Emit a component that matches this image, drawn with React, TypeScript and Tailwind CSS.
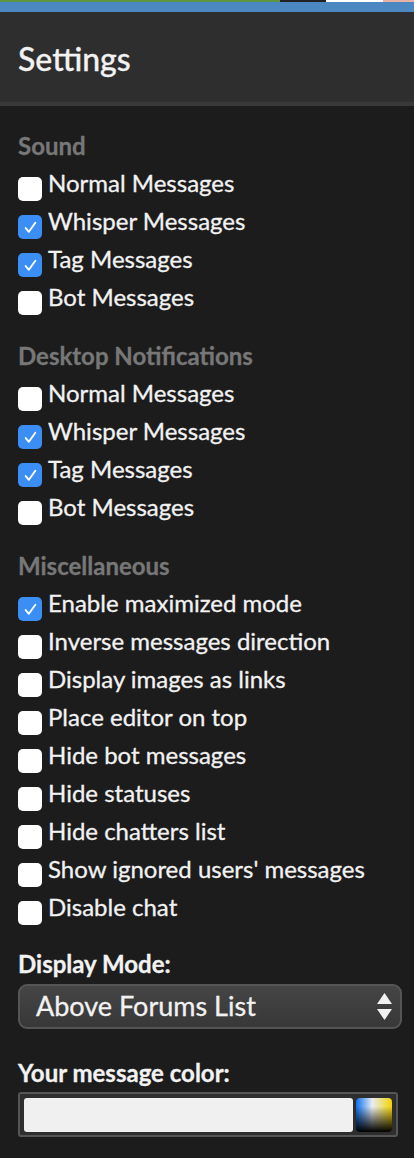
const sections = [
  {
    title: 'Sound',
    items: [
      { label: 'Normal Messages', checked: false },
      { label: 'Whisper Messages', checked: true },
      { label: 'Tag Messages', checked: true },
      { label: 'Bot Messages', checked: false },
    ],
  },
  {
    title: 'Desktop Notifications',
    items: [
      { label: 'Normal Messages', checked: false },
      { label: 'Whisper Messages', checked: true },
      { label: 'Tag Messages', checked: true },
      { label: 'Bot Messages', checked: false },
    ],
  },
  {
    title: 'Miscellaneous',
    items: [
      { label: 'Enable maximized mode', checked: true },
      { label: 'Inverse messages direction', checked: false },
      { label: 'Display images as links', checked: false },
      { label: 'Place editor on top', checked: false },
      { label: 'Hide bot messages', checked: false },
      { label: 'Hide statuses', checked: false },
      { label: 'Hide chatters list', checked: false },
      { label: "Show ignored users' messages", checked: false },
      { label: 'Disable chat', checked: false },
    ],
  },
];

function Checkbox({ checked }: { checked: boolean }) {
  if (checked) {
    return (
      <span className="mt-[13px] mr-[6px] flex h-[24px] w-[24px] shrink-0 items-center justify-center rounded-[5px] bg-[#3b8ef3]">
        <svg width="15" height="15" viewBox="0 0 14 14" fill="none">
          <path d="M2.5 7.5 L5.5 11 L11.5 2.5" stroke="#fff" strokeWidth="1.7" strokeLinecap="round" strokeLinejoin="round" />
        </svg>
      </span>
    );
  }
  return <span className="mt-[13px] mr-[6px] h-[24px] w-[24px] shrink-0 rounded-[5px] bg-white" />;
}

export default function App() {
  return (
    <div className="min-h-[1158px] w-[414px] bg-[#1c1c1c] text-[#f2f2f2] [font-family:Lato,sans-serif] [-webkit-text-stroke:0.3px_currentColor]">
      {/* top strip */}
      <div className="flex h-[2px]">
        <div className="w-[280px] bg-[#5d9640]" />
        <div className="w-[46px] bg-[#222]" />
        <div className="w-[57px] bg-white" />
        <div className="flex-1 bg-[#e6b2a4]" />
      </div>
      <div className="h-[10px] bg-[#4b87c1]" />

      {/* header */}
      <div className="box-content flex h-[90px] items-center border-b-4 border-[#3a3a3a] bg-[#2e2e2e] px-[18px]">
        <h1 className="mt-[4px] text-[32px] font-medium leading-none">Settings</h1>
      </div>

      <div className="px-[18px] pt-[26px]">
        {sections.map((s, i) => (
          <div key={s.title} className={i > 0 ? 'mt-[26px]' : ''}>
            <div className="mb-[4px] text-[24px] font-bold leading-[28px] text-[#777]">{s.title}</div>
            {s.items.map((it) => (
              <label key={it.label} className="flex h-[38px] items-start">
                <Checkbox checked={it.checked} />
                <span className="text-[24px] leading-[38px]">{it.label}</span>
              </label>
            ))}
          </div>
        ))}

        <div className="mt-[24px] text-[24px] font-bold leading-[28px]">Display Mode:</div>
        <div className="mt-[6px] flex h-[45px] w-[384px] items-center justify-between rounded-[9px] border-2 border-[#555] bg-gradient-to-b from-[#454545] to-[#383838] pl-[16px] pr-[8px]">
          <span className="text-[27px]">Above Forums List</span>
          <svg width="15" height="27" viewBox="0 0 15 27">
            <path d="M7.5 0 L15 11 L0 11 Z" fill="#f2f2f2" />
            <path d="M0 16 L15 16 L7.5 27 Z" fill="#f2f2f2" />
          </svg>
        </div>

        <div className="mt-[30px] text-[24px] font-bold leading-[28px]">Your message color:</div>
        <div className="mt-[5px] flex h-[45px] w-[380px] items-center gap-[3px] rounded-[3px] border-2 border-[#555] bg-[#2e2e2e] px-[4px]">
          <div className="h-[34px] flex-1 rounded-[3px] bg-[#f0f0f0]" />
          <div
            className="h-[34px] w-[36px] rounded-[4px]"
            style={{
              background:
                'linear-gradient(to bottom, rgba(0,0,0,0) 25%, #000 100%), linear-gradient(to right, #0a6ff0, #e8ecf4 45%, #f2d400)',
            }}
          />
        </div>
      </div>
    </div>
  );
}
